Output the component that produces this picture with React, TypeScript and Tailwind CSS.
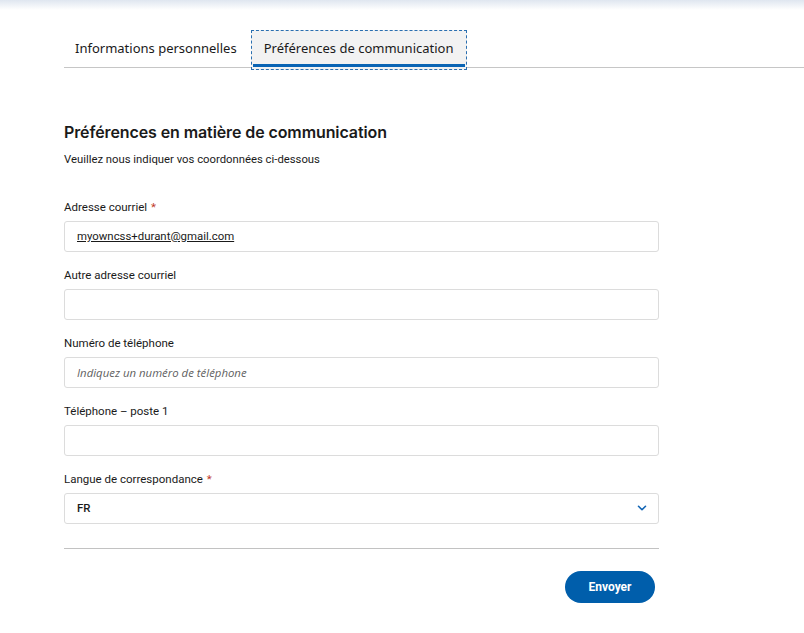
import { ChevronDown } from "lucide-react";

const labelClassName = "block text-[11.5px] text-[#1a1a1a] mb-[6px] leading-[15px]";
const inputClassName =
  "w-full h-[31px] rounded-[3px] border border-[#dcdcdc] bg-white px-3 text-[11.4px] text-[#1a1a1a] outline-none";

function Field({
  label,
  required,
  children,
}: {
  label: string;
  required?: boolean;
  children: React.ReactNode;
}) {
  return (
    <div>
      <label className={labelClassName}>
        {label}
        {required && <span className="ml-1 text-[#c0392b]">*</span>}
      </label>
      {children}
    </div>
  );
}

export default function App() {
  return (
    <div
      className="min-h-[633px] bg-white"
      style={{ fontFamily: "Roboto, 'Open Sans', sans-serif" }}
    >
      <div className="h-[10px] bg-gradient-to-b from-[#dfe6f0] to-white" />
      <div className="pl-16 pt-5">
        <div className="flex items-end border-b border-[#c6c6c6]">
          <button
            type="button"
            className="h-[37px] pl-[11px] pr-[10px] text-[13px] text-[#1a1a1a] font-['Noto_Sans',sans-serif]"
          >
            Informations personnelles
          </button>
          <button
            type="button"
            className="relative ml-[4px] h-[40px] w-[216px] -mb-[3px] border border-dashed border-[#2a6fb0] bg-[#f2f2f2] text-[13px] text-[#1a1a1a] font-['Noto_Sans',sans-serif]"
          >
            <span className="block pb-[3px]">Préférences de communication</span>
            <span className="absolute left-[1px] right-[1px] bottom-[2px] h-[3px] bg-[#0a64b4]" />
          </button>
        </div>
      </div>

      <div className="w-[595px] ml-16 mt-[53px]">
        <h2 className="text-[16px] font-semibold text-[#1a1a1a] leading-[22px] font-['Inter',sans-serif] tracking-[-0.1px]">
          Préférences en matière de communication
        </h2>
        <p className="mt-[9px] text-[11.3px] text-[#1a1a1a]">
          Veuillez nous indiquer vos coordonnées ci-dessous
        </p>

        <div className="mt-[31px] flex flex-col gap-[16px]">
          <Field label="Adresse courriel" required>
            <div className={`${inputClassName} flex items-center`}>
              <span className="underline">myowncss+durant@gmail.com</span>
            </div>
          </Field>
          <Field label="Autre adresse courriel">
            <input className={inputClassName} />
          </Field>
          <Field label="Numéro de téléphone">
            <input
              className={`${inputClassName} italic placeholder:text-[#5f5f5f] font-['Open_Sans',sans-serif]`}
              placeholder="Indiquez un numéro de téléphone"
            />
          </Field>
          <Field label="Téléphone – poste 1">
            <input className={inputClassName} />
          </Field>
          <Field label="Langue de correspondance" required>
            <div className={`${inputClassName} flex items-center justify-between pr-[9px]`}>
              <span className="font-medium">FR</span>
              <ChevronDown size={14} strokeWidth={2.75} className="text-[#1264b4]" />
            </div>
          </Field>
        </div>

        <div className="mt-[24px] border-t border-[#c2c2c2]" />

        <div className="mt-[22px] flex justify-end pr-1">
          <button
            type="button"
            className="h-[32px] w-[90px] rounded-full bg-[#005eab] text-[12px] font-bold text-white"
          >
            Envoyer
          </button>
        </div>
      </div>
    </div>
  );
}
